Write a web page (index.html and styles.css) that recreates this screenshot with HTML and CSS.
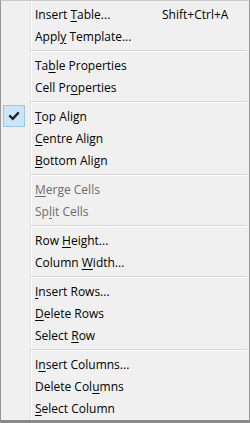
FILE: index.html
```html
<!DOCTYPE html>
<html>
<head>
<meta charset="utf-8">
<link rel="stylesheet" href="styles.css">
</head>
<body>
<div class="menu">
  <div class="item"><span class="icon"></span><span class="label">Insert <u>T</u>able...</span><span class="key">Shift+Ctrl+A</span></div>
  <div class="item"><span class="icon"></span><span class="label">Appl<u>y</u> Template...</span></div>
  <div class="sep"></div>
  <div class="item"><span class="icon"></span><span class="label">Ta<u>b</u>le Properties</span></div>
  <div class="item"><span class="icon"></span><span class="label">Cell Pr<u>o</u>perties</span></div>
  <div class="sep"></div>
  <div class="item"><span class="icon checked"><svg width="22" height="22" viewBox="0 0 22 22"><path d="M7.2 11.2 L9.8 13.8 L15 8.2" fill="none" stroke="#222" stroke-width="2.3" stroke-linecap="square"/></svg></span><span class="label"><u>T</u>op Align</span></div>
  <div class="item"><span class="icon"></span><span class="label"><u>C</u>entre Align</span></div>
  <div class="item"><span class="icon"></span><span class="label"><u>B</u>ottom Align</span></div>
  <div class="sep"></div>
  <div class="item disabled"><span class="icon"></span><span class="label"><u>M</u>erge Cells</span></div>
  <div class="item disabled"><span class="icon"></span><span class="label">Sp<u>l</u>it Cells</span></div>
  <div class="sep"></div>
  <div class="item"><span class="icon"></span><span class="label">Row <u>H</u>eight...</span></div>
  <div class="item"><span class="icon"></span><span class="label">Column <u>W</u>idth...</span></div>
  <div class="sep"></div>
  <div class="item"><span class="icon"></span><span class="label"><u>I</u>nsert Rows...</span></div>
  <div class="item"><span class="icon"></span><span class="label"><u>D</u>elete Rows</span></div>
  <div class="item"><span class="icon"></span><span class="label">Select <u>R</u>ow</span></div>
  <div class="sep"></div>
  <div class="item"><span class="icon"></span><span class="label">I<u>n</u>sert Columns...</span></div>
  <div class="item"><span class="icon"></span><span class="label">Delete Col<u>u</u>mns</span></div>
  <div class="item"><span class="icon"></span><span class="label"><u>S</u>elect Column</span></div>
</div>
</body>
</html>
```
FILE: styles.css
```css
html, body {
  margin: 0;
  padding: 0;
  background: #f0f0f0;
}
.menu {
  box-sizing: border-box;
  width: 250px;
  height: 423px;
  padding: 2px 2px 0 2px;
  border: 1px solid #979797;
  border-top-color: #c8c8c8;
  border-bottom-width: 3px;
  border-bottom-color: #8a8a8a;
  background-color: #f0f0f0;
  background-image: linear-gradient(to right, transparent 30px, #e2e2e2 30px, #e2e2e2 31px, #ffffff 31px, #ffffff 32px, transparent 32px);
  background-origin: border-box;
  font-family: "Open Sans", "Noto Sans", sans-serif;
  font-size: 12px;
  color: #000;
}
.item {
  display: grid;
  grid-template-columns: 32px 127px 1fr;
  align-items: center;
  height: 22px;
  white-space: nowrap;
}
.icon {
  box-sizing: border-box;
  width: 22px;
  height: 22px;
  display: block;
}
.icon.checked {
  background: #cce4f7;
  border: 1px solid #98c6ec;
}
.icon.checked svg {
  display: block;
  margin: -1px;
}
.label u, .key u {
  text-decoration-thickness: 1px;
  text-underline-offset: 2px;
}
.disabled {
  color: #6d6d6d;
}
.sep {
  height: 7px;
  margin-left: 28px;
  display: flex;
  flex-direction: column;
  justify-content: center;
}
.sep::before {
  content: "";
  display: block;
  height: 1px;
  background: #d7d7d7;
  border-bottom: 1px solid #ffffff;
}
```
